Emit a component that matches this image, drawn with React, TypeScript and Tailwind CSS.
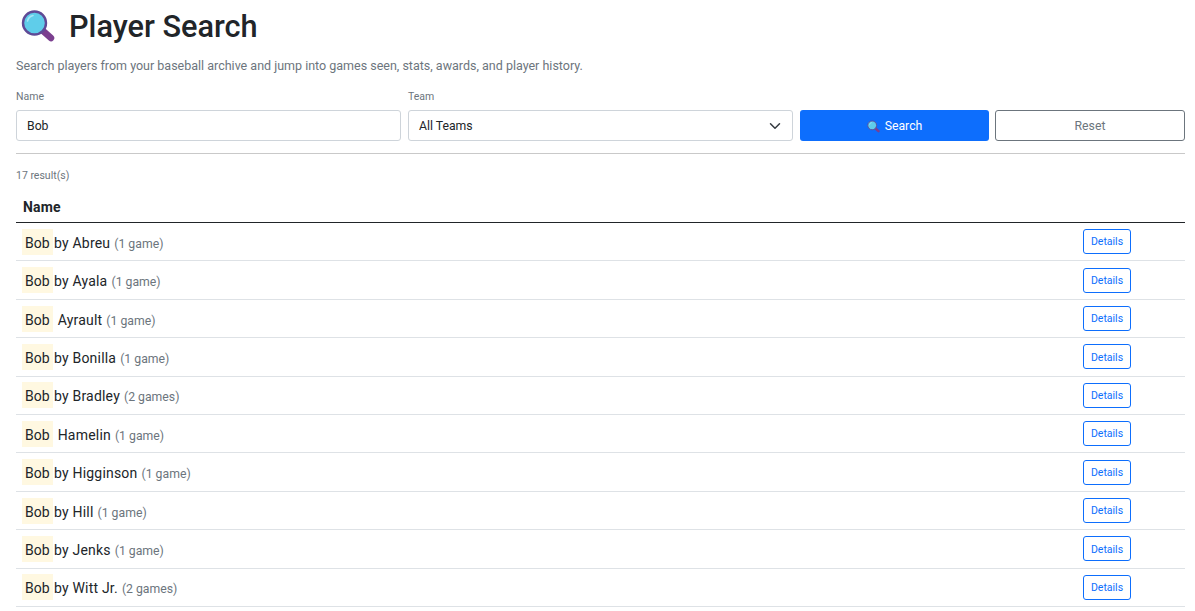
const players: [string, string, string][] = [
  ["Bob", "by Abreu", "(1 game)"],
  ["Bob", "by Ayala", "(1 game)"],
  ["Bob", " Ayrault", "(1 game)"],
  ["Bob", "by Bonilla", "(1 game)"],
  ["Bob", "by Bradley", "(2 games)"],
  ["Bob", " Hamelin", "(1 game)"],
  ["Bob", "by Higginson", "(1 game)"],
  ["Bob", "by Hill", "(1 game)"],
  ["Bob", "by Jenks", "(1 game)"],
  ["Bob", "by Witt Jr.", "(2 games)"],
];

function Magnifier({ size }: { size: number }) {
  return (
    <svg width={size} height={size} viewBox="0 0 34 32" fill="none" aria-hidden="true">
      <path d="M21 20 L30 28" stroke="#7b3f8f" strokeWidth="6.5" strokeLinecap="round" />
      <circle cx="13.5" cy="13" r="11.5" fill="#5fcdea" stroke="#5f4a96" strokeWidth="2.4" />
      <path d="M6.5 11 A7.5 7.5 0 0 1 12 5.5" stroke="#a5e6f5" strokeWidth="1.6" strokeLinecap="round" />
    </svg>
  );
}

export default function App() {
  return (
    <div className="h-[611px] overflow-hidden bg-white pl-4 pr-[10px] font-['Roboto','Noto_Sans',sans-serif] text-[#212529]">
      <h1 className="flex h-[52px] items-center text-[30.7px] font-medium leading-none">
        <span className="ml-[5px] mr-[14px] flex">
          <Magnifier size={34} />
        </span>
        <span className="mt-[2px]">Player Search</span>
      </h1>
      <p className="mt-[6px] text-[12.5px] leading-4 text-[#6c757d]">
        Search players from your baseball archive and jump into games seen, stats, awards, and player history.
      </p>
      <div className="mt-[15px] grid grid-cols-[385px_385px_189px_189px] items-end gap-x-[7px]">
        <label className="block">
          <span className="mb-[6px] block text-[10.5px] leading-[15px] text-[#6c757d]">Name</span>
          <input
            readOnly
            value="Bob"
            className="block h-[31px] w-full rounded-[3px] border border-[#ced4da] bg-white px-[10px] text-[12.25px] text-[#212529]"
          />
        </label>
        <label className="block">
          <span className="mb-[6px] block text-[10.5px] leading-[15px] text-[#6c757d]">Team</span>
          <div className="flex h-[31px] items-center justify-between rounded-[3px] border border-[#ced4da] bg-white pl-[10px] pr-[11px] pt-px text-[12.25px]">
            <span>All Teams</span>
            <svg width="12" height="12" viewBox="0 0 16 16" fill="none" stroke="#343a40" strokeWidth="2" strokeLinecap="round" strokeLinejoin="round">
              <path d="M2 5l6 6 6-6" />
            </svg>
          </div>
        </label>
        <button className="flex h-[31px] items-center justify-center gap-[5px] rounded-[3px] bg-[#0d6efd] pt-px text-[12.25px] text-white">
          <Magnifier size={13} />
          Search
        </button>
        <button className="-ml-px h-[31px] rounded-[3px] border border-[#6c757d] bg-white pt-px text-[12.25px] text-[#6c757d]">
          Reset
        </button>
      </div>
      <hr className="mt-3 border-0 border-t border-[#c9c9c9]" />
      <p className="mt-[14px] text-[10.5px] leading-[15px] text-[#6c757d]">17 result(s)</p>
      <table className="mt-[6px] w-full border-collapse text-[14px]">
        <thead>
          <tr className="h-[33.6px] border-b border-[#212529]">
            <th className="px-[7px] pt-[4px] text-left text-[14px] font-bold tracking-[0.2px]">Name</th>
            <th className="w-[102px]" />
          </tr>
        </thead>
        <tbody>
          {players.map(([a, b, c], i) => (
            <tr key={i} className="h-[38.4px] border-b border-[#dee2e6]">
              <td className="pl-[6px] pr-[7px] align-middle whitespace-pre tracking-[0.2px]">
                <mark className="mr-px inline-block w-[31px] bg-[#fff8e1] px-[3px] pb-[2px] pt-[4px] leading-5 tracking-normal text-[#212529]">{a}</mark>
                {b.startsWith(" ") ? " " + b.trim() : b}
                <span className="ml-1 text-[12.25px] tracking-normal text-[#6c757d]">{c}</span>
              </td>
              <td className="align-middle">
                <button className="block h-[25px] w-[48px] rounded-[3px] border border-[#0d6efd] bg-white pt-px text-[10.5px] text-[#0d6efd]">
                  Details
                </button>
              </td>
            </tr>
          ))}
        </tbody>
      </table>
    </div>
  );
}
